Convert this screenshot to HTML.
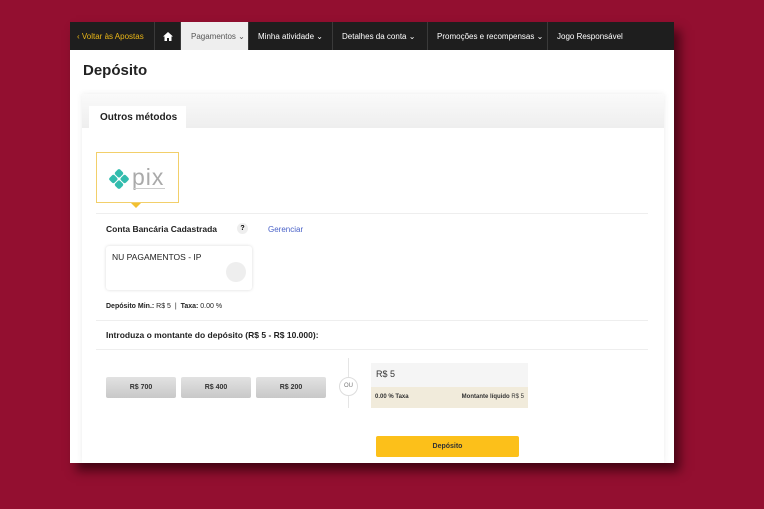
<!DOCTYPE html>
<html><head><meta charset="utf-8"><style>
*{box-sizing:border-box;margin:0;padding:0}
body{width:764px;height:509px;background:#930f30;font-family:"Liberation Sans",sans-serif;position:relative;overflow:hidden}
.win{position:absolute;left:70px;top:22px;width:604px;height:441px;background:#fff;box-shadow:6px 8px 10px rgba(40,0,10,.7)}
.nav{height:28px;background:#1e1e1e;display:flex;font-size:8px;color:#fff;align-items:center;white-space:nowrap}
.nav div{height:28px;display:flex;align-items:center;padding:0 9px;border-right:1px solid #3a3a3a;flex:none}
.nav .back{color:#e8b517;width:85px;padding-left:7px}
.nav .act{background:#eee;color:#555;width:68px;padding:0 0 0 10px}
h1{position:absolute;left:13px;top:40px;font-size:15px;font-weight:bold;color:#222}
.card{position:absolute;left:12px;top:72px;width:582px;height:369px;background:#fff;box-shadow:0 0 6px rgba(0,0,0,.08)}
.tabbar{height:34px;background:linear-gradient(#fafafa,#eee)}
.tab{position:absolute;left:7px;top:12px;width:97px;height:22px;background:#fff;font-size:10px;font-weight:bold;color:#222;padding:6px 0 0 11px}
.pix{position:absolute;left:14px;top:58px;width:83px;height:51px;border:1px solid #f2cf6a;background:#fff}
.arrow{position:absolute;left:49px;top:109px;width:0;height:0;border:5px solid transparent;border-top:5px solid #f2c030}
.hr{position:absolute;left:14px;height:1px;background:#eee;width:552px}
.t{position:absolute;font-size:8px;color:#222}
.b{font-weight:bold}
.btn{position:absolute;top:283px;width:70px;height:21px;background:linear-gradient(#e2e2e2,#c8c8c8);border-radius:2px;font-size:7px;font-weight:bold;color:#333;text-align:center;line-height:21px}
</style></head><body>
<div class="win">
<div class="nav">
<div class="back">‹ Voltar às Apostas</div>
<div style="width:26px;justify-content:center;padding:0"><svg width="10" height="9" viewBox="0 0 10 9"><path d="M5 0L0 4.5H1.5V9H4V6H6V9H8.5V4.5H10Z" fill="#fff"/></svg></div>
<div class="act">Pagamentos ⌄</div>
<div style="width:84px">Minha atividade ⌄</div>
<div style="width:95px">Detalhes da conta ⌄</div>
<div style="width:120px">Promoções e recompensas ⌄</div>
<div style="border:none">Jogo Responsável</div>
</div>
<h1>Depósito</h1>
<div class="card">
<div class="tabbar"></div>
<div class="tab">Outros métodos</div>
<div class="pix"><svg width="83" height="51" viewBox="0 0 83 51"><g fill="#32bcad" transform="translate(22 26) rotate(45)"><rect x="-7.5" y="-7.5" width="7" height="7" rx="2"/><rect x="0.5" y="-7.5" width="7" height="7" rx="2"/><rect x="-7.5" y="0.5" width="7" height="7" rx="2"/><rect x="0.5" y="0.5" width="7" height="7" rx="2"/></g><text x="35" y="32" font-size="23" fill="#aaa" font-family="Liberation Sans" letter-spacing="1">pix</text><rect x="36" y="35" width="32" height="1" fill="#ccc"/></svg></div>
<div class="arrow"></div>
<div class="hr" style="top:119px"></div>
<div class="t b" style="left:24px;top:130px;font-size:8.5px">Conta Bancária Cadastrada</div>
<div style="position:absolute;left:155px;top:129px;width:11px;height:11px;border-radius:50%;background:#eee;font-size:7px;font-weight:bold;text-align:center;line-height:11px">?</div>
<div class="t" style="left:186px;top:131px;color:#4a62c8">Gerenciar</div>
<div style="position:absolute;left:24px;top:152px;width:146px;height:44px;border-radius:3px;box-shadow:0 0 3px rgba(0,0,0,.15)"><div class="t" style="left:6px;top:6px;font-size:8.5px">NU PAGAMENTOS - IP</div><div style="position:absolute;right:6px;top:16px;width:20px;height:20px;border-radius:50%;background:#eee"></div></div>
<div class="t" style="left:24px;top:209px;font-size:7px"><b>Depósito Min.:</b> R$ 5 &nbsp;| &nbsp;<b>Taxa:</b> 0.00 %</div>
<div class="hr" style="top:226px"></div>
<div class="t b" style="left:24px;top:236px;font-size:8.5px">Introduza o montante do depósito (R$ 5 - R$ 10.000):</div>
<div class="hr" style="top:255px"></div>
<div class="btn" style="left:24px">R$ 700</div>
<div class="btn" style="left:99px">R$ 400</div>
<div class="btn" style="left:174px">R$ 200</div>
<div style="position:absolute;left:266px;top:264px;width:1px;height:50px;background:#e5e5e5"></div>
<div style="position:absolute;left:257px;top:283px;width:19px;height:19px;border-radius:50%;border:1px solid #ddd;background:#fff;font-size:6px;color:#777;text-align:center;line-height:17px">OU</div>
<div style="position:absolute;left:289px;top:269px;width:157px;height:24px;background:#f5f5f5;font-size:9px;color:#333;padding:6px 0 0 5px">R$ 5</div>
<div style="position:absolute;left:289px;top:293px;width:157px;height:21px;background:#f1ebdb;font-size:6px;color:#333;padding:7px 4px 0 4px"><b>0.00 % Taxa</b><span style="float:right"><b>Montante líquido</b> R$ 5</span></div>
<div style="position:absolute;left:294px;top:342px;width:143px;height:21px;background:#fcc01a;border-radius:2px;font-size:7px;font-weight:bold;color:#333;text-align:center;line-height:21px">Depósito</div>
</div>
</div>
</body></html>
